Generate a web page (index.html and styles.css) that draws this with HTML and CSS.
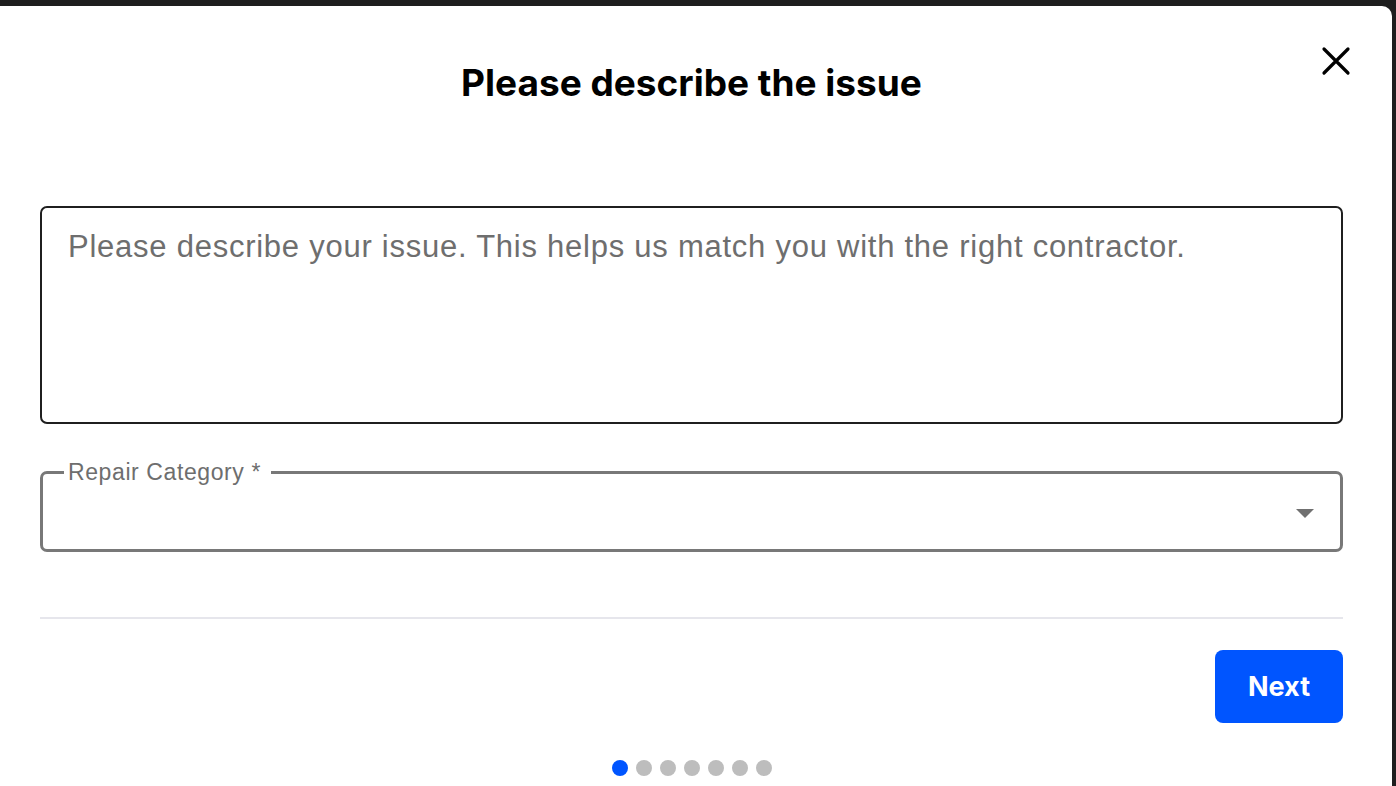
FILE: index.html
```html
<!DOCTYPE html>
<html lang="en">
<head>
    <meta charset="UTF-8">
    <meta name="viewport" content="width=device-width, initial-scale=1.0">
    <title>Please describe the issue</title>
    <link rel="stylesheet" href="styles.css">
</head>
<body>
    <div class="modal">
        <div class="modal-header">
            <h1>Please describe the issue</h1>
            <button class="close" aria-label="Close">
                <svg width="30" height="30" viewBox="0 0 30 30">
                    <path d="M3 3 L27 27 M27 3 L3 27" stroke="#000" stroke-width="3.2" stroke-linecap="round" fill="none"/>
                </svg>
            </button>
        </div>

        <textarea class="issue" placeholder="Please describe your issue. This helps us match you with the right contractor."></textarea>

        <fieldset class="select-box">
            <legend>Repair Category *</legend>
            <span class="arrow"></span>
        </fieldset>

        <div class="divider"></div>

        <div class="actions">
            <button class="next">Next</button>
        </div>

        <div class="dots">
            <span class="dot active"></span>
            <span class="dot"></span>
            <span class="dot"></span>
            <span class="dot"></span>
            <span class="dot"></span>
            <span class="dot"></span>
            <span class="dot"></span>
        </div>
    </div>
</body>
</html>
```

FILE: styles.css
```css
html, body {
    margin: 0;
    height: 100%;
    overflow: hidden;
}

body {
    background-color: #1e1e1e;
    font-family: "Liberation Sans", Arial, sans-serif;
    padding: 6px 4px 0 0;
    box-sizing: border-box;
}

.modal {
    background-color: #fff;
    border-radius: 0 10px 0 0;
    height: 100%;
    padding: 0 49px 0 40px;
    box-sizing: border-box;
}

.modal-header {
    position: relative;
    height: 200px;
    text-align: center;
}

.modal-header h1 {
    margin: 0;
    padding-top: 55px;
    font-family: Inter, sans-serif;
    font-size: 37px;
    font-weight: 700;
    color: #000;
    line-height: 44px;
}

.close {
    position: absolute;
    top: 40px;
    right: -8px;
    background: none;
    border: none;
    padding: 0;
    cursor: pointer;
}

.issue {
    display: block;
    width: 100%;
    height: 218px;
    box-sizing: border-box;
    border: 2px solid #1f1f1f;
    border-radius: 7px;
    padding: 21px 26px;
    font-family: "Liberation Sans", Arial, sans-serif;
    font-size: 31px;
    letter-spacing: 0.75px;
    resize: none;
    outline: none;
}

.issue::placeholder {
    color: #6e6e6e;
}

.select-box {
    position: relative;
    margin: 41px 0 0;
    height: 87px;
    box-sizing: border-box;
    border: 3px solid #787878;
    border-radius: 7px;
    padding: 0 24px;
}

.select-box legend {
    padding: 0 10px 0 4px;
    margin-left: -3px;
    font-size: 23px;
    letter-spacing: 0.6px;
    color: #6e6e6e;
    line-height: 14px;
}

.arrow {
    position: absolute;
    right: 26px;
    top: 30px;
    width: 0;
    height: 0;
    border-left: 9px solid transparent;
    border-right: 9px solid transparent;
    border-top: 9px solid #707070;
}

.divider {
    margin-top: 65px;
    height: 2px;
    background-color: #e6e6ec;
}

.actions {
    display: flex;
    justify-content: flex-end;
    margin-top: 31px;
}

.next {
    width: 128px;
    height: 73px;
    background-color: #0055ff;
    color: #fff;
    border: none;
    border-radius: 8px;
    font-family: Inter, sans-serif;
    font-size: 27px;
    font-weight: 700;
    cursor: pointer;
}

.dots {
    display: flex;
    justify-content: center;
    gap: 8px;
    margin-top: 37px;
    padding-left: 1px;
}

.dot {
    width: 16px;
    height: 16px;
    border-radius: 50%;
    background-color: #bdbdbd;
}

.dot.active {
    background-color: #0055ff;
}
```
